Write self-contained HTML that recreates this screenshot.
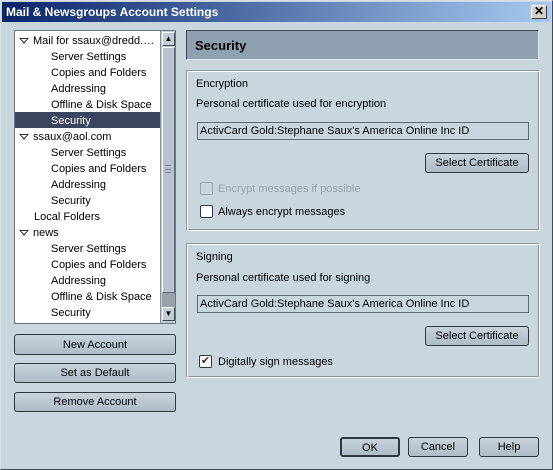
<!DOCTYPE html>
<html><head><style>
*{margin:0;padding:0;box-sizing:border-box}
body{width:553px;height:470px;background:#c9d6de;font-family:"Liberation Sans",sans-serif;font-size:11px;color:#000;position:relative;overflow:hidden}
.abs{position:absolute}
#win{left:0;top:0;width:553px;height:470px;border:1px solid #d8e0e6;border-right-color:#404850;border-bottom-color:#404850}
#title{left:2px;top:2px;width:549px;height:20px;background:linear-gradient(90deg,#0a246a,#a6caf0);color:#fff;font-weight:bold;font-size:12px;line-height:21px;padding-left:4px}
#close{left:531px;top:5px;width:16px;height:14px;background:#d4d0c8;border:1px solid;border-color:#fff #404040 #404040 #fff;color:#000;font-size:12px;line-height:11px;text-align:center;font-weight:bold}
#tree{left:14px;top:30px;width:162px;height:294px;background:#fff;border:1px solid #6a7680}
.row{position:absolute;left:0;width:145px;height:16px;line-height:18px;white-space:nowrap}
.row.sel{background:#3b4560;color:#fff}
.tri{position:absolute;left:4px;top:6px;width:0;height:0;border-left:5px solid transparent;border-right:5px solid transparent;border-top:6px solid #333}
.tri:after{content:"";position:absolute;left:-3px;top:-5px;border-left:3px solid transparent;border-right:3px solid transparent;border-top:3px solid #fff}
#sb{left:145px;top:0;width:15px;height:292px;background:#c0c8d0;border-left:1px solid #8a949c}
.sbb{position:absolute;left:1px;width:13px;height:14px;background:#c4ccd4;border:1px solid;border-color:#fff #404850 #404850 #fff}
.btn{position:absolute;background:linear-gradient(#c8d2da,#aebcc8);border:1px solid #30383e;border-radius:3px;text-align:center;font-size:11px}
#hdr{left:186px;top:30px;width:353px;height:30px;background:#8fa1b0;border:1px solid;border-color:#404850 #e0e8ee #e0e8ee #404850;font-weight:bold;font-size:13px;line-height:30px;padding-left:8px}
.grp{position:absolute;border:1px solid;border-color:#8a949c #fff #fff #8a949c;box-shadow:inset 1px 1px 0 #fff,inset -1px -1px 0 #8a949c}
.fld{position:absolute;left:197px;width:332px;height:18px;border:1px solid #606a72;background:#c9d6de;line-height:17px;padding-left:2px}
.cb{position:absolute;width:13px;height:13px;border:1px solid #30383e;border-radius:2px;background:#fff}
.t{position:absolute;margin-top:1px}
</style></head><body>
<div id="win" class="abs"></div>
<div id="title" class="abs">Mail &amp; Newsgroups Account Settings</div>
<div id="close" class="abs">✕</div>
<div id="tree" class="abs">
<div class="row" style="top:1px"><span class="tri"></span><span style="position:absolute;left:18px">Mail for ssaux@dredd.…</span></div>
<div class="row" style="top:17px;padding-left:36px">Server Settings</div>
<div class="row" style="top:33px;padding-left:36px">Copies and Folders</div>
<div class="row" style="top:49px;padding-left:36px">Addressing</div>
<div class="row" style="top:65px;padding-left:36px">Offline &amp; Disk Space</div>
<div class="row sel" style="top:81px;padding-left:36px">Security</div>
<div class="row" style="top:97px"><span class="tri"></span><span style="position:absolute;left:18px">ssaux@aol.com</span></div>
<div class="row" style="top:113px;padding-left:36px">Server Settings</div>
<div class="row" style="top:129px;padding-left:36px">Copies and Folders</div>
<div class="row" style="top:145px;padding-left:36px">Addressing</div>
<div class="row" style="top:161px;padding-left:36px">Security</div>
<div class="row" style="top:177px;padding-left:19px">Local Folders</div>
<div class="row" style="top:193px"><span class="tri"></span><span style="position:absolute;left:18px">news</span></div>
<div class="row" style="top:209px;padding-left:36px">Server Settings</div>
<div class="row" style="top:225px;padding-left:36px">Copies and Folders</div>
<div class="row" style="top:241px;padding-left:36px">Addressing</div>
<div class="row" style="top:257px;padding-left:36px">Offline &amp; Disk Space</div>
<div class="row" style="top:273px;padding-left:36px">Security</div>
<div id="sb" class="abs">
<div class="sbb" style="top:1px;font-size:8px;line-height:11px;text-align:center">▲</div>
<div class="abs" style="left:1px;top:16px;width:13px;height:246px;background:#b8c2cc;border:1px solid;border-color:#fff #606a72 #606a72 #fff"></div>
<div class="abs" style="left:4px;top:134px;width:6px;height:8px;border-top:1px solid #808a94;border-bottom:1px solid #808a94"><div style="margin-top:3px;border-top:1px solid #808a94"></div></div>
<div class="abs" style="left:1px;top:262px;width:13px;height:14px;background:#98a0aa"></div>
<div class="sbb" style="top:276px;font-size:8px;line-height:11px;text-align:center">▼</div>
</div>
</div>
<div class="btn" style="left:14px;top:334px;width:162px;height:21px;line-height:20px">New Account</div>
<div class="btn" style="left:14px;top:363px;width:162px;height:20px;line-height:19px">Set as Default</div>
<div class="btn" style="left:14px;top:392px;width:162px;height:20px;line-height:19px">Remove Account</div>
<div id="hdr" class="abs">Security</div>
<div class="grp" style="left:186px;top:70px;width:354px;height:161px"></div>
<div class="t" style="left:196px;top:77px">Encryption</div>
<div class="t" style="left:196px;top:97px">Personal certificate used for encryption</div>
<div class="fld" style="top:122px">ActivCard Gold:Stephane Saux's America Online Inc ID</div>
<div class="btn" style="left:425px;top:153px;width:104px;height:20px;line-height:19px">Select Certificate</div>
<div class="cb" style="left:200px;top:182px;background:#c9d6de;border-color:#98a4ae"></div>
<div class="t" style="left:218px;top:182px;color:#98a2aa">Encrypt messages if possible</div>
<div class="cb" style="left:200px;top:205px"></div>
<div class="t" style="left:218px;top:205px">Always encrypt messages</div>
<div class="grp" style="left:186px;top:243px;width:354px;height:135px"></div>
<div class="t" style="left:196px;top:250px">Signing</div>
<div class="t" style="left:196px;top:271px">Personal certificate used for signing</div>
<div class="fld" style="top:295px">ActivCard Gold:Stephane Saux's America Online Inc ID</div>
<div class="btn" style="left:425px;top:326px;width:104px;height:20px;line-height:19px">Select Certificate</div>
<div class="cb" style="left:199px;top:355px;font-size:11px;line-height:10px;text-align:center;color:#333">✔</div>
<div class="t" style="left:218px;top:355px">Digitally sign messages</div>
<div class="btn" style="left:340px;top:437px;width:60px;height:20px;line-height:18px;border-width:2px">OK</div>
<div class="btn" style="left:408px;top:437px;width:60px;height:20px;line-height:19px">Cancel</div>
<div class="btn" style="left:479px;top:437px;width:60px;height:20px;line-height:19px">Help</div>
</body></html>
